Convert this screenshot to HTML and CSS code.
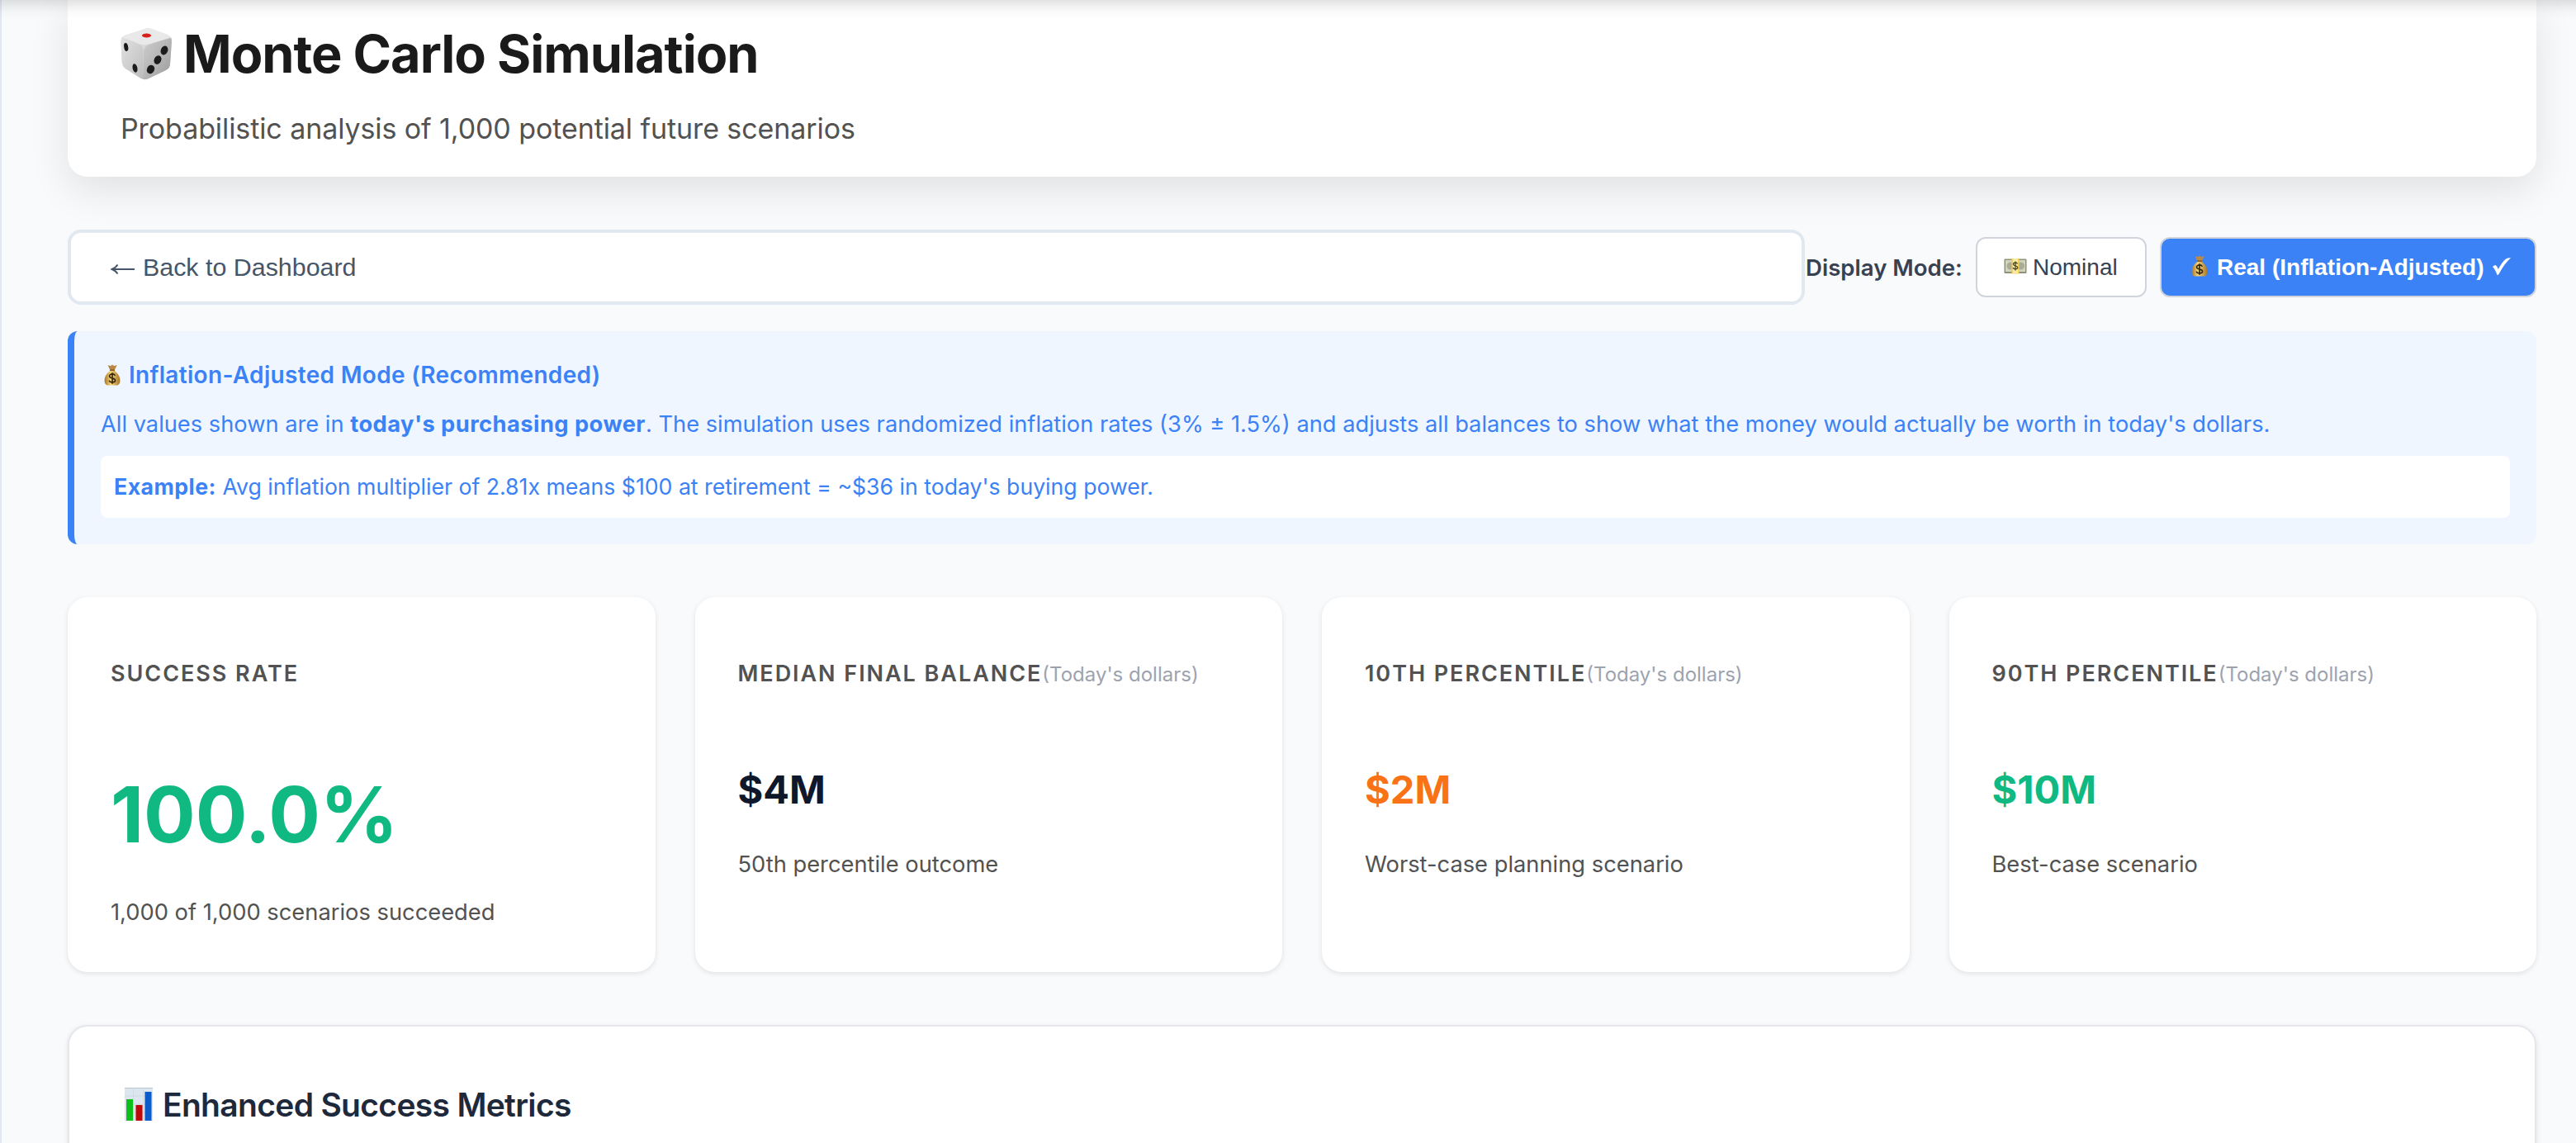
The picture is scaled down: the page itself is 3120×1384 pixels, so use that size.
FILE: index.html
```
<!DOCTYPE html>
<html lang="en">
<head>
<meta charset="utf-8">
<title>Monte Carlo Simulation</title>
<link rel="stylesheet" href="styles.css">
</head>
<body>
<svg class="defs" width="0" height="0" aria-hidden="true">
  <defs>
    <linearGradient id="gold" x1="0" x2="1" y1="0" y2="0">
      <stop offset="0" stop-color="#a87424"/><stop offset=".4" stop-color="#f6d77a"/><stop offset="1" stop-color="#a9772a"/>
    </linearGradient>
    <symbol id="bag" viewBox="0 0 20 26">
      <path d="M4.500 1.200 8 2 10 .6 12 2l3.800-.8-3.200 6H7.500z" fill="#b98a45"/>
      <path d="M7.600 7.500h4.800c3.600 3 7 7 7 12 0 4.500-2 6-4.500 6H5.100c-2.500 0-4.500-1.500-4.500-6 0-5 3.400-9 7-12z" fill="url(#gold)"/>
      <path d="M7 6.300h6v1.800H7z" fill="#8d5f20"/>
      <path d="M13.400 13.800c-.5-1.200-1.700-1.900-3.400-1.900-2 0-3.400.9-3.400 2.500 0 3.300 7 1.800 7 5 0 1.600-1.500 2.500-3.600 2.500-2 0-3.400-.8-3.800-2.300M10 10.200v13.600" fill="none" stroke="#33260f" stroke-width="1.600"/>
    </symbol>
  </defs>
</svg>
<div class="topbar"></div>
<main class="page">
  <header class="hero">
    <h1 class="hero-title">
      <svg class="die" viewBox="0 0 64 64" aria-hidden="true">
        <defs>
          <linearGradient id="dl" x1="0" x2="1" y1="0" y2="1"><stop offset="0" stop-color="#e2e2e2"/><stop offset="1" stop-color="#bdbdbd"/></linearGradient>
          <linearGradient id="dr" x1="0" x2="1" y1="0" y2="1"><stop offset="0" stop-color="#cfcfcf"/><stop offset="1" stop-color="#9c9c9c"/></linearGradient>
        </defs>
        <path d="M28 2.500Q32 .5 36 1.500L57 9Q62 11.500 62 17L60 45Q59.500 50 55 52L33 62.500Q29 64 25 62L6 50Q2 47 1.700 42L.5 17Q.5 12 5 10z" fill="#d9d9d9"/>
        <path d="M2 12.500 24 21.500Q28 24 27.500 30L27 62.500Q25.500 62.500 24 61.500L6 50Q2 47 1.700 42L.5 17Q.5 14 2 12.500z" fill="url(#dl)"/>
        <path d="M61 12.500 34 21Q28.500 23.500 28 30L27 62.800Q30 63.800 33 62.500L55 52Q59.500 50 60 45L62 17Q62 14 61 12.500z" fill="url(#dr)"/>
        <path d="M28 2.500Q32 .5 36 1.500L57 9Q61 11 60.500 12.500L34 20.500Q29 22 24 20.500L3 12.500Q2.500 11 5 10z" fill="#e9e9e9"/>
        <ellipse cx="31.500" cy="10" rx="5.500" ry="2.500" fill="#d8201c"/>
        <g fill="#1b1b1b">
          <ellipse cx="6.700" cy="24" rx="2.500" ry="5" transform="rotate(-10 6.700 24)"/>
          <ellipse cx="17.500" cy="49.500" rx="2.900" ry="5.300" transform="rotate(-12 17.500 49.500)"/>
          <ellipse cx="53" cy="28" rx="4.200" ry="5.600" transform="rotate(22 53 28)"/>
          <ellipse cx="45" cy="39.500" rx="4.300" ry="5.500" transform="rotate(25 45 39.500)"/>
          <ellipse cx="36.500" cy="51" rx="4.500" ry="5.500" transform="rotate(28 36.500 51)"/>
        </g>
      </svg>
      <span>Monte Carlo Simulation</span>
    </h1>
    <p class="hero-sub">Probabilistic analysis of 1,000 potential future scenarios</p>
  </header>

  <div class="toolbar">
    <button class="back" type="button">
      <svg class="arrow" viewBox="0 0 30 16" aria-hidden="true"><path d="M29 8H2M8.500 2.500Q6 6.500 1.500 8 6 9.500 8.500 13.500" fill="none" stroke="#475569" stroke-width="1.900"/></svg>
      <span>Back to Dashboard</span>
    </button>
    <div class="modes">
      <span class="modes-label">Display Mode:</span>
      <button class="mode nominal" type="button">
        <svg class="cash" viewBox="0 0 28 19" aria-hidden="true">
          <rect x=".5" y=".5" width="27" height="17.500" rx="1" fill="#8f9279"/>
          <rect x="2" y="2" width="24" height="14" fill="#d3d4bd"/>
          <circle cx="8" cy="9" r="4.500" fill="#a9ab94"/><circle cx="20.500" cy="9" r="4.500" fill="#a9ab94"/>
          <rect x="9.500" width="9" height="18.500" fill="#f4cf52"/><rect x="11" width="6" height="18.500" fill="#fbe9a0"/>
          <path d="M16.600 6.500c-.4-1-1.300-1.500-2.600-1.500-1.500 0-2.500.7-2.500 1.900 0 2.500 5.200 1.400 5.200 3.900 0 1.200-1.200 2-2.700 2s-2.500-.6-2.900-1.800M14 3.500v11" fill="none" stroke="#4a4426" stroke-width="1.300"/>
        </svg>
        <span>Nominal</span>
      </button>
      <button class="mode real" type="button">
        <svg class="bag" aria-hidden="true"><use href="#bag"/></svg>
        <span>Real (Inflation-Adjusted)</span>
        <svg class="check" viewBox="0 0 22 22" aria-hidden="true"><path d="M0 11Q2 9 3.600 9 5.500 10 6.800 14 12 4.500 16 1.500 18 .2 22 .3 14 7.500 7.500 20L5.600 21.300Q3.500 14.500 0 11z" fill="#fff"/></svg>
      </button>
    </div>
  </div>

  <section class="info">
    <h2 class="info-title"><svg class="bag" aria-hidden="true"><use href="#bag"/></svg><span>Inflation-Adjusted Mode (Recommended)</span></h2>
    <p class="info-text">All values shown are in <strong>today's purchasing power</strong>. The simulation uses randomized inflation rates (3% ± 1.5%) and adjusts all balances to show what the money would actually be worth in today's dollars.</p>
    <p class="info-example"><strong>Example:</strong> Avg inflation multiplier of 2.81x means $100 at retirement = ~$36 in today's buying power.</p>
  </section>

  <section class="cards">
    <article class="card">
      <h3 class="card-label">SUCCESS RATE</h3>
      <p class="card-value big green">100.0%</p>
      <p class="card-note">1,000 of 1,000 scenarios succeeded</p>
    </article>
    <article class="card">
      <h3 class="card-label">MEDIAN FINAL BALANCE<small>(Today's dollars)</small></h3>
      <p class="card-value">$4M</p>
      <p class="card-note">50th percentile outcome</p>
    </article>
    <article class="card">
      <h3 class="card-label">10TH PERCENTILE<small>(Today's dollars)</small></h3>
      <p class="card-value orange">$2M</p>
      <p class="card-note">Worst-case planning scenario</p>
    </article>
    <article class="card">
      <h3 class="card-label">90TH PERCENTILE<small>(Today's dollars)</small></h3>
      <p class="card-value green">$10M</p>
      <p class="card-note">Best-case scenario</p>
    </article>
  </section>

  <section class="metrics">
    <h2 class="metrics-title">
      <svg class="chart" viewBox="0 0 34 40" aria-hidden="true">
        <rect width="34" height="40" fill="#dbe6ef"/><path d="M0 .5h34" stroke="#b9c6cf"/>
        <path d="M0 10h34M0 20h34M0 30h34M10.500 0v40M22.500 0v40" stroke="#c9d7e2" stroke-width=".7"/>
        <rect x="2" y="14" width="8" height="26" fill="#0cc01c"/><rect x="13.500" y="21" width="8" height="19" fill="#c00808"/><rect x="24.500" y="5" width="8" height="35" fill="#0a5cc8"/>
      </svg>
      <span>Enhanced Success Metrics</span>
    </h2>
  </section>
</main>
</body>
</html>
```
FILE: styles.css
```
* { box-sizing: border-box; margin: 0; padding: 0; }
html, body { height: 1384px; overflow: hidden; }
body { background: #f8fafc; font-family: Inter, "Liberation Sans", sans-serif; }
svg { flex: none; display: block; }
button { font: inherit; cursor: pointer; }
.defs { position: absolute; }
.topbar { position: fixed; left: -40px; right: -40px; top: -80px; height: 80px; z-index: 2; box-shadow: 0 2px 20px rgba(0,0,0,.2); }
.page { height: 1384px; overflow: hidden; border-left: 2px solid #e2e8f0; padding: 0 48px 0 80px; }

.hero { height: 214px; padding: 30px 64px 0; background: #fff; border-radius: 0 0 24px 24px; box-shadow: 0 16px 48px rgba(0,0,0,.1); }
.hero-title { display: flex; gap: 12px; height: 70px; line-height: 70px; font-size: 63px; font-weight: 700; letter-spacing: -1px; color: #1a1a1a; }
.die { width: 64px; height: 64px; margin-top: 3px; }
.hero-sub { margin-top: 31px; line-height: 50px; font-size: 34px; letter-spacing: -.09px; color: #525252; }

.toolbar { display: flex; align-items: center; height: 91px; margin-top: 64px; }
.back { flex: 1; display: flex; align-items: center; gap: 9px; height: 91px; padding: 0 48px; border: 4px solid #e2e8f0; border-radius: 16px; background: #fff; color: #475569; font-family: "Liberation Sans", Arial, sans-serif; font-size: 30.400px; text-align: left; }
.arrow { width: 30px; height: 16px; margin-top: 5px; }
.modes { display: flex; align-items: center; width: 886px; }
.modes-label { width: 207px; padding-left: 1px; font-size: 27.600px; font-weight: 600; color: #374151; }
.mode { display: flex; align-items: center; height: 73px; padding: 0 32px; border: 2px solid #d1d5db; border-radius: 12px; background: #fff; font-family: "Liberation Sans", Arial, sans-serif; font-size: 28px; color: #374151; white-space: nowrap; }
.nominal { width: 207px; gap: 7px; margin-right: 16px; }
.cash { width: 28px; height: 19px; margin-top: -3px; }
.real { width: 456px; padding-left: 36px; background: #3b82f6; color: #fff; font-weight: 700; }
.bag { width: 20px; height: 26px; }
.real .bag { margin-right: 11px; margin-top: -4px; }
.check { width: 22px; height: 22px; margin-left: 10px; margin-top: -2px; }

.info { height: 258px; margin-top: 32px; padding: 27px 32px 0; border-left: 8px solid #3b82f6; border-radius: 12px; background: #eff6ff; color: #3b82f6; }
.info-title { display: flex; align-items: center; gap: 10px; height: 52px; padding-left: 4px; font-size: 28px; font-weight: 600; letter-spacing: .320px; }
.info-text { margin-top: 8px; line-height: 52px; font-size: 27.250px; white-space: nowrap; }
.info-example { height: 75px; margin-top: 12px; padding: 0 16px; border-radius: 8px; background: #fff; line-height: 75px; font-size: 26.650px; white-space: nowrap; }
strong { font-weight: 700; letter-spacing: .470px; }

.cards { display: grid; grid-template-columns: repeat(4, 1fr); gap: 48px; margin-top: 64px; }
.card { height: 454px; padding: 67px 52px 0; border-radius: 24px; background: #fff; box-shadow: 0 2px 6px rgba(0,0,0,.1); }
.card-label { height: 52px; line-height: 52px; font-size: 27px; font-weight: 600; letter-spacing: 1.950px; color: #525252; white-space: nowrap; }
.card-label small { font-size: 24px; font-weight: 400; letter-spacing: 0; color: #9ca3af; }
.card-value { margin-top: 74px; height: 80px; line-height: 80px; font-size: 47px; font-weight: 700; color: #0f172a; }
.card-value.big { height: 138px; line-height: 140px; font-size: 93px; }
.card-value.green { color: #10b981; }
.card-value.orange { color: #f97316; }
.card-note { margin-top: 29px; line-height: 44px; font-size: 27.300px; color: #525252; }

.metrics { height: 300px; margin-top: 64px; padding: 64px 67px; border: 2px solid #e5e7eb; border-radius: 24px; background: #fff; box-shadow: 0 2px 6px rgba(0,0,0,.1); }
.metrics-title { display: flex; align-items: center; gap: 12px; height: 60px; font-size: 39px; font-weight: 600; letter-spacing: -.680px; color: #1e293b; }
.chart { width: 34px; height: 40px; }
```
